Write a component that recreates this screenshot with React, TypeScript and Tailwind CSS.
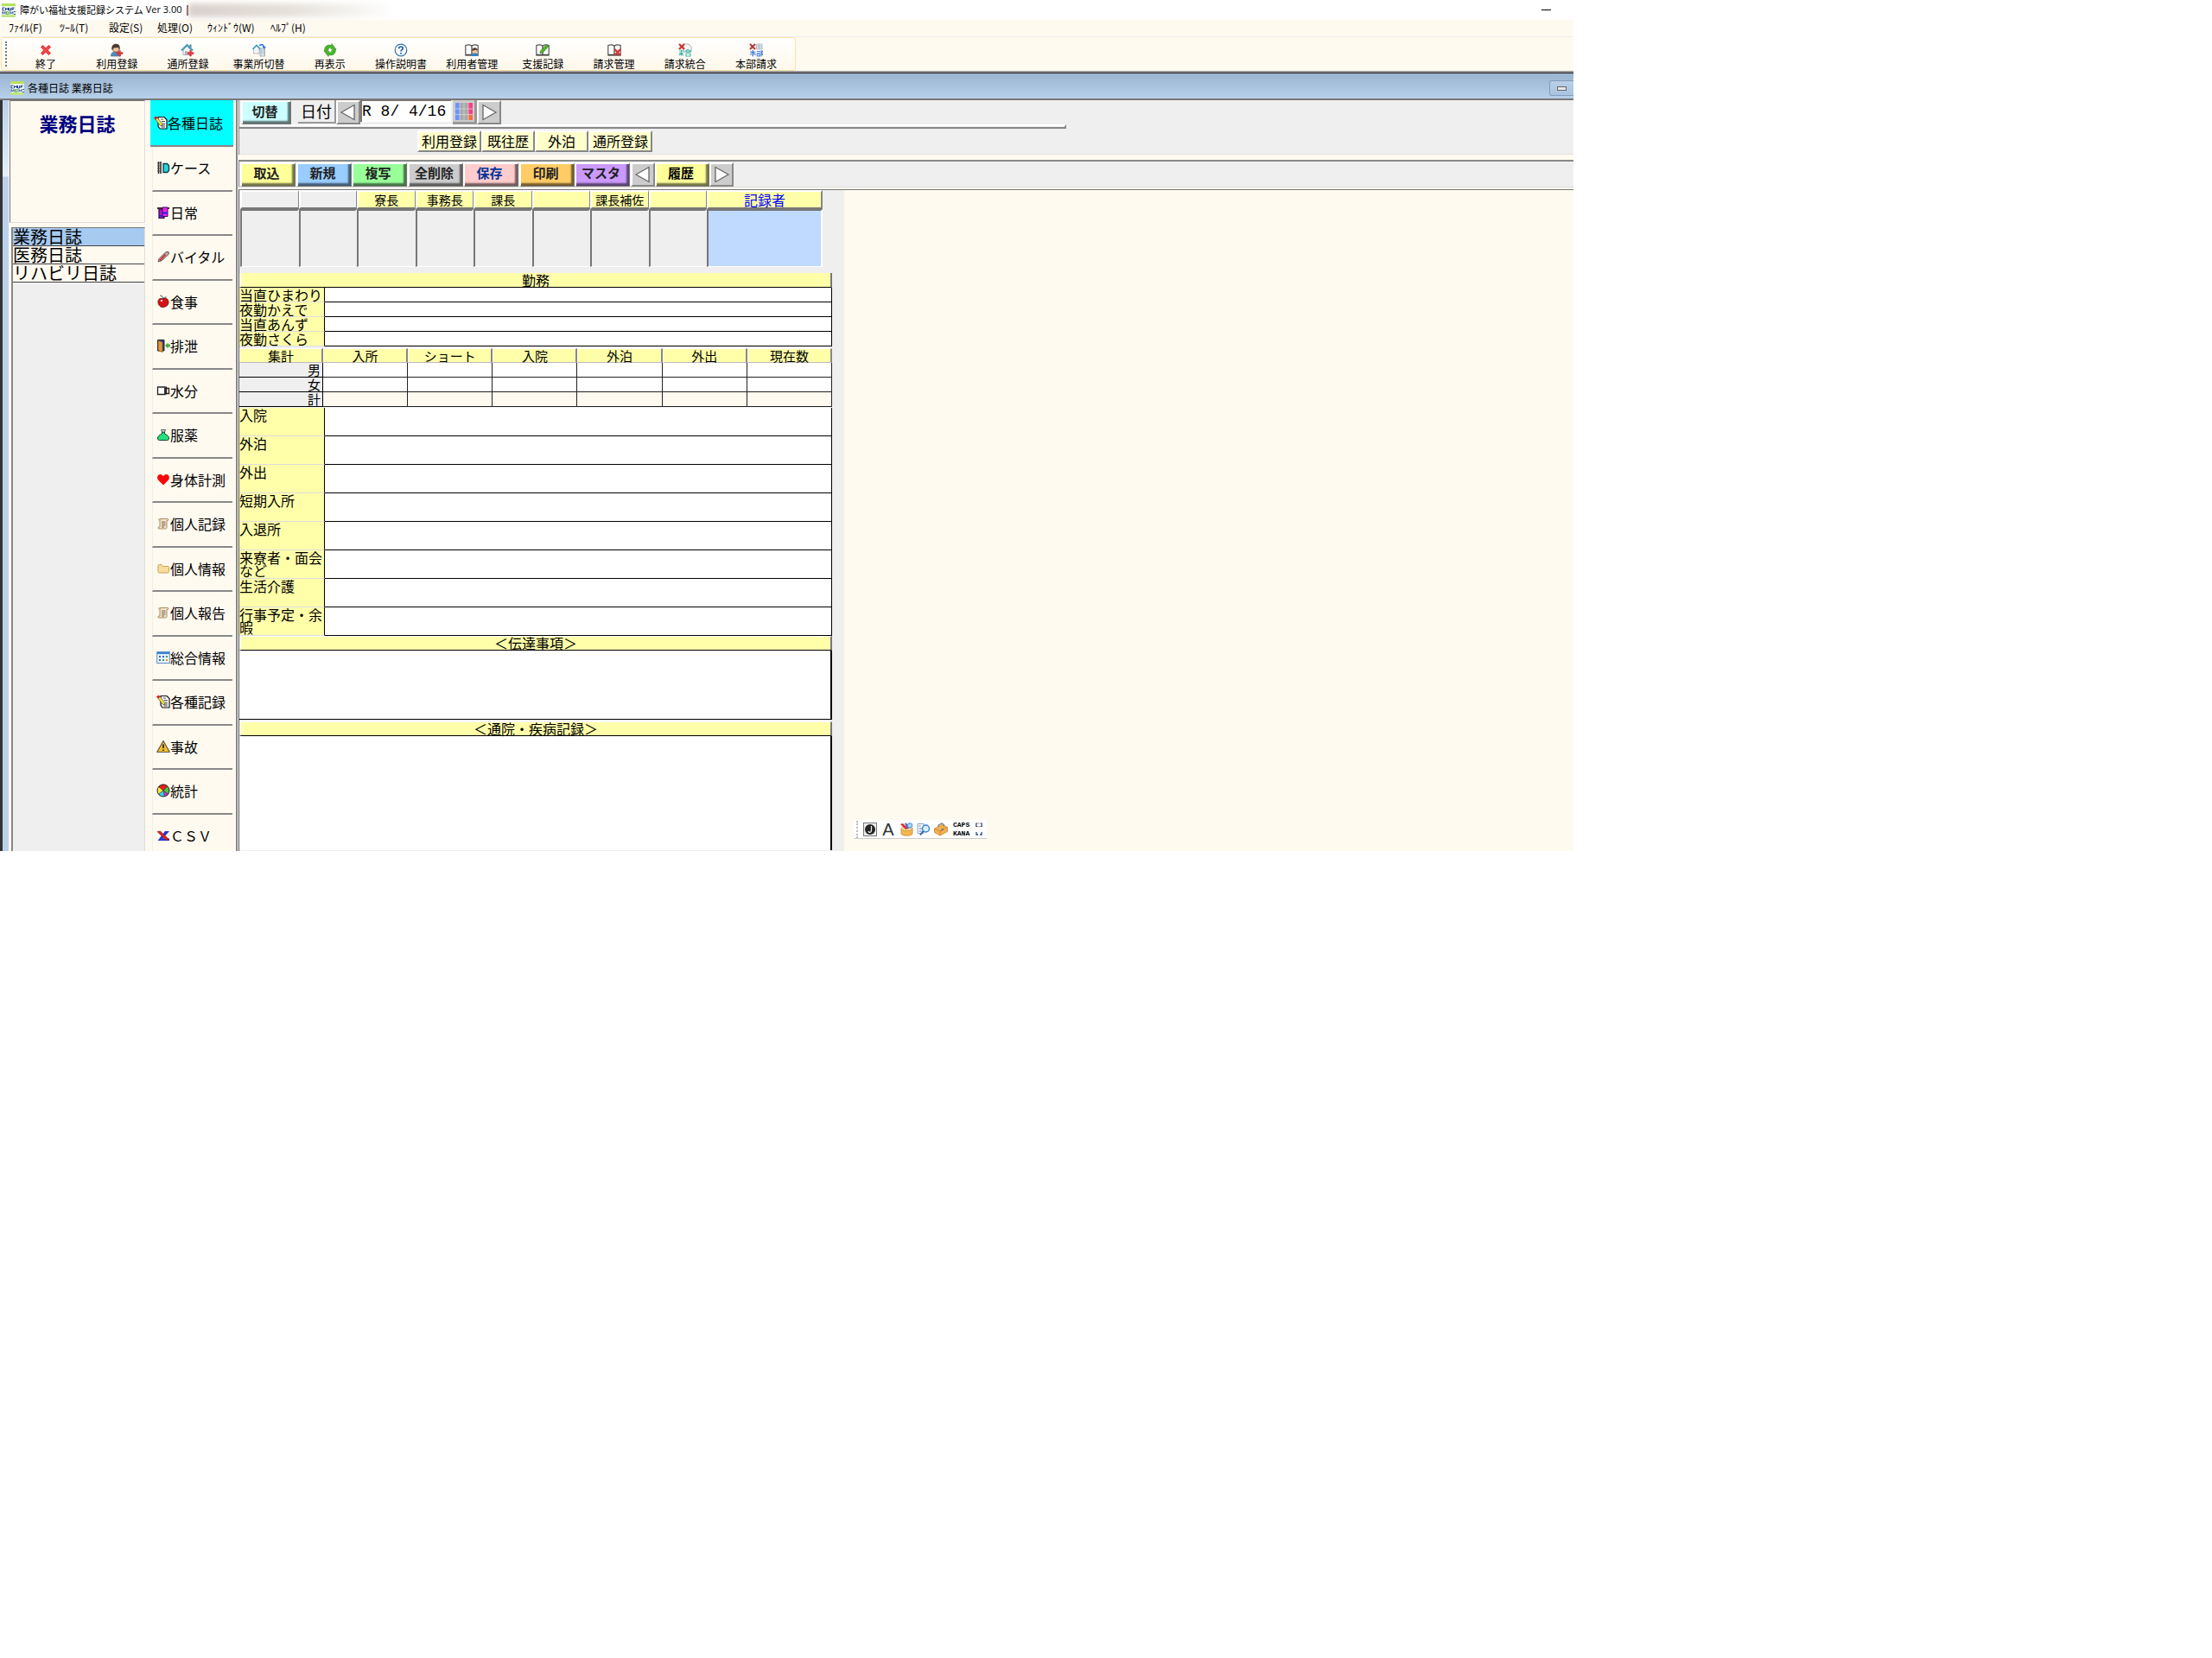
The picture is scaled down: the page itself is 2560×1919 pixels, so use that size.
import type { ReactNode } from "react";
import { clsx } from "clsx";

function Icon({ children, size = "h-4 w-4" }: { children: ReactNode; size?: string }) {
  return (
    <svg viewBox="0 0 16 16" className={clsx("shrink-0", size)} aria-hidden="true">
      {children}
    </svg>
  );
}

const redCross = (
  <path d="M2.5 4.5 4.5 2.5 8 5.8 11.5 2.5 13.5 4.5 10.2 8 13.5 11.5 11.5 13.5 8 10.2 4.5 13.5 2.5 11.5 5.8 8z" fill="#f04848" stroke="#e02c2c" strokeWidth="1" />
);

const redPlus = <path d="M10.5 8.5h2v2h2.5v2.2h-2.5V15h-2v-2.300H8v-2.200h2.500z" fill="#e8373c" stroke="#b8242a" strokeWidth=".4" />;

const openBook = (
  <>
    <path d="M.8 2.500C3.500 1.500 6 1.700 8 3c2-1.300 4.500-1.500 7.200-.5V14H.8z" fill="#fff" stroke="#555" strokeWidth="1.200" />
    <path d="M8 3v10.500M1 13.500h14" stroke="#444" strokeWidth="1.300" />
  </>
);

const house = (
  <>
    <path d="M3 7.500v6h8.500v-6L7.500 3.500z" fill="#f3f5f6" stroke="#8c9aa5" strokeWidth=".8" />
    <path d="M1 8.500 7.500 2l6.500 6.500" fill="none" stroke="#3f9fbd" strokeWidth="2" />
    <path d="M10.500 1.500h2v4l-2-2z" fill="#4a7f95" />
    <path d="M5 9h2.500v4.500H5z" fill="#9fb4c0" />
  </>
);

const scroll = (
  <>
    <path d="M4 2.500h9c1.200 0 1.200 2 0 2h-1v8c0 1.500-1 1.500-1.500 1.500H3c-1.500 0-1.500-2 0-2h1z" fill="#f5e6c8" stroke="#a88a62" />
    <path d="M6 6h4.500M6 8h4.500M6 10h4.500M6 12h3" stroke="#66594a" strokeWidth=".9" />
    <path d="M2 2.500h3v2H2.500z" fill="#c9ac80" />
  </>
);

const note = (
  <>
    <path d="M5 1.500h7l3 3V15H7l-2-3z" fill="#fff" stroke="#111" strokeWidth="1.200" />
    <path d="M8 4h3M9 6.500h4M10 9h3M8 11h5M8.500 13H13" stroke="#333" strokeWidth=".9" />
    <path d="M1.500 3.500 4 2l5.500 7 .5 3-3-1z" fill="#f7e23c" stroke="#444" strokeWidth=".7" />
    <path d="M0 2.500 2.500.5l2 2L2 4.500z" fill="#e01818" />
  </>
);

const appLogo = (
  <>
    <rect x=".5" y=".5" width="15" height="15" rx="1" fill="#f4fbf0" stroke="#dbe9d0" />
    <path d="M0 0h16v3H0zM0 13.500h16v2H0z" fill="#b4e25f" />
    <path d="M1 5h2.500M1 5v3h2.500M4.500 8V5l1.500 2 1.500-2v3M8.500 5v3h2V5M12 8V5h2.500M12 6.500h2" fill="none" stroke="#28479a" strokeWidth="1" />
    <path d="M1 12.500v-3l1.500 2 1.500-2v3M10 12.500v-3l1.500 2 1.500-2v3M14 9.500h2M14 12.500h2" fill="none" stroke="#28479a" strokeWidth=".9" />
    <rect x="5.500" y="9.800" width="2.500" height="2.500" fill="none" stroke="#49aa3a" />
  </>
);

const menus = [
  { label: "ﾌｧｲﾙ(F)", width: "w-[59px]" },
  { label: "ﾂｰﾙ(T)", width: "w-[57px]" },
  { label: "設定(S)", width: "w-[56px]" },
  { label: "処理(O)", width: "w-[58px]" },
  { label: "ｳｨﾝﾄﾞｳ(W)", width: "w-[73px]" },
  { label: "ﾍﾙﾌﾟ(H)", width: "w-[60px]" },
];

const tools = [
  { label: "終了", icon: redCross },
  {
    label: "利用登録",
    icon: (
      <>
        <path d="M1.500 15c0-4 2-5 5.500-5s5 1 5.500 5z" fill="#4d8fc9" stroke="#45627a" strokeWidth=".6" />
        <circle cx="7" cy="6.500" r="3.800" fill="#f2c49a" stroke="#5c4332" strokeWidth=".6" />
        <path d="M2.500 8C1.500 3 4 .8 7.500.8S12.500 4 11.500 8L9.800 5 5 5.500z" fill="#4b3a33" />
        {redPlus}
      </>
    ),
  },
  { label: "通所登録", icon: <>{house}{redPlus}</> },
  {
    label: "事業所切替",
    icon: (
      <>
        <path d="M1.500 6v6H8V6L5 3z" fill="#f2f4f5" stroke="#97a5ad" strokeWidth=".7" />
        <path d="m.5 7 4.500-4.500L9.500 7" fill="none" stroke="#3f9fbd" strokeWidth="1.600" />
        <path d="M9 6h5.500v9H9z" fill="#e4e9ed" stroke="#8797a3" strokeWidth=".7" />
        <path d="M10 8h1.500M12.500 8H14M10 10h1.500M12.500 10H14M10 12h1.500M12.500 12H14" stroke="#8fa5b5" />
        <path d="M8 2.500c3-1.500 5-1 5.500 2" fill="none" stroke="#2d6fdc" strokeWidth="1.600" />
        <path d="M11.500 4H16l-2.200 2.700z" fill="#2d6fdc" />
      </>
    ),
  },
  {
    label: "再表示",
    icon: (
      <>
        <path d="M1 9.500 1.500 8C1.500 4 5 1 9 2.500L10 .5l4.500 6H8.500L9.500 5C7 4.500 6 6 6 8.500z" fill="#48b52b" stroke="#2f8a1a" strokeWidth=".5" />
        <path d="m15 6.500-.5 1.500c0 4-3.500 7-7.500 5.500l-1 2-4.500-6h6L6.500 11c2.500.5 3.500-1 3.500-3.500z" fill="#48b52b" stroke="#2f8a1a" strokeWidth=".5" />
      </>
    ),
  },
  {
    label: "操作説明書",
    icon: (
      <>
        <circle cx="8" cy="8" r="6.800" fill="#f7fbff" stroke="#3474ab" strokeWidth="1.200" />
        <path d="M5.800 6.200c0-3 4.400-2.800 4.400-.2 0 1.700-2.200 1.700-2.200 3.500" fill="none" stroke="#235f96" strokeWidth="1.700" />
        <circle cx="8" cy="11.800" r="1" fill="#235f96" />
      </>
    ),
  },
  {
    label: "利用者管理",
    icon: (
      <>
        {openBook}
        <path d="M7.500 15c0-3 1.500-4 4-4s4 1 4 4z" fill="#3b7fb9" />
        <circle cx="11.500" cy="8.800" r="2.800" fill="#f0bf92" />
        <path d="M8.300 9c-.5-5 7-5 6.500 0l-2-1.500z" fill="#4d3a31" />
      </>
    ),
  },
  { label: "支援記録", icon: <>{openBook}<path d="M5 11.500 5.500 9 12.500 1.500 15 3.500 8 11z" fill="#58b52c" stroke="#2f7a15" strokeWidth=".7" /></> },
  { label: "請求管理", icon: <>{openBook}<path d="m8.500 7 6.500 7M15 7l-6.500 7" stroke="#d83434" strokeWidth="2.400" /></> },
  {
    label: "請求統合",
    icon: (
      <>
        <path d="M6 1h6l3 3v6H6z" fill="#f5f6f7" stroke="#9ba2a8" strokeWidth=".8" />
        <path d="m1 1 6 6M7 1 1 7" stroke="#c93434" strokeWidth="2.200" />
        <path d="M1 9h5M3.500 7.500v7M1 11.500h5M1 14l2-2 3 2M8 9.500l3-2 4 2M9 10h5M9 12h5v3H9z" fill="none" stroke="#3cb8a8" strokeWidth="1.100" />
      </>
    ),
  },
  {
    label: "本部請求",
    icon: (
      <>
        <path d="M8.500 1H15v6H8.500zM8.500 3H15M8.500 5H15M11.500 1v6" fill="#f2f4f6" stroke="#9db0bd" strokeWidth=".8" />
        <path d="m1 1 6 6M7 1 1 7" stroke="#b93a3a" strokeWidth="2.200" />
        <path d="M1 10h6.500M4.200 8v7.500M4.200 10 1 13.500M4.200 10l3.300 3.500M3 13.500h2.500M9 9.500h4M8.500 11.500H13M9.300 13h3v2h-3zM14 8.500v7M14 9h1.700l-1 2.500 1 2h-1.500" fill="none" stroke="#4d82dd" strokeWidth="1.100" />
      </>
    ),
  },
];

const navItems = [
  { label: "各種日誌", icon: note },
  {
    label: "ケース",
    icon: (
      <>
        <path d="M2.500 1v14M5 1v14" stroke="#222" strokeWidth="1.500" />
        <path d="M1 3h5M1 6h5M1 9h5M1 12h5" stroke="#555" />
        <path d="M8 3.500h4.500l2 2v6l-2 2H8z" fill="#25d3dd" stroke="#0f3c46" strokeWidth="1.300" />
      </>
    ),
  },
  {
    label: "日常",
    icon: (
      <>
        <path d="M1 3h14" stroke="#222" strokeWidth="1.800" />
        <path d="M3 4h6v10.500H3z" fill="#b812c8" stroke="#2a0b3a" strokeWidth="1.200" />
        <path d="M7 2h6v10.500H7z" fill="#ee22ee" stroke="#3a0b4a" />
        <path d="M7 8.500h6M3 12h4" stroke="#2424d8" strokeWidth="2" />
      </>
    ),
  },
  {
    label: "バイタル",
    icon: (
      <>
        <path d="M2 14 3 10.500 11 2.500l3 0 .5 2.500-8 7.500z" fill="#b7a7a4" stroke="#5c4a4a" strokeWidth=".9" />
        <path d="m4 12.500 6.500-7" stroke="#d42323" strokeWidth="1.800" />
      </>
    ),
  },
  {
    label: "食事",
    icon: (
      <>
        <path d="M8 5C3 3 1.500 6.500 2 9.500S5 15 8 14.500s6-2 6-5.500-2.500-6-6-4z" fill="#d41515" stroke="#6a0808" strokeWidth=".8" />
        <path d="M8 5.500C8 3 7 2 4.500 1M8 5c1-2 2-2 3.500-2" fill="none" stroke="#333" />
        <path d="M5 7.500 7 6.500" stroke="#fff" strokeWidth="1.500" />
      </>
    ),
  },
  {
    label: "排泄",
    icon: (
      <>
        <path d="M1.500 1.500H9V14H1.500z" fill="#27459a" stroke="#222" />
        <path d="M2 2l5 2v11.500L2 13.500z" fill="#e39a3c" stroke="#7a4a14" strokeWidth=".7" />
        <path d="m10 8 3.500-3.500v2H16v3h-2.500v2z" fill="#48a93a" />
      </>
    ),
  },
  {
    label: "水分",
    icon: (
      <>
        <path d="M1.500 4h8.500v8.500H1.500z" fill="#fff" stroke="#222" strokeWidth="1.300" />
        <path d="M10 5.500h4.500v6H10zM11.500 3.500v9" fill="none" stroke="#222" strokeWidth="1.300" />
      </>
    ),
  },
  {
    label: "服薬",
    icon: (
      <>
        <path d="M6.500 5v2C3 8.500 1.500 10.500 1.500 12c0 1.500.5 2.500 2 2.500h9c1.500 0 2-1 2-2.500 0-1.500-1.500-3.500-5-5V5z" fill="#25e07c" stroke="#17402b" />
        <path d="M5.500 2.500h5l-1 2.500h-3z" fill="#d9f5e6" stroke="#333" strokeWidth=".8" />
      </>
    ),
  },
  { label: "身体計測", icon: <path d="M8 14.500 2 8.500C-.5 5 2.500 1.500 5.500 2.200 7 2.500 8 4 8 4.500c0-.5 1-2 2.500-2.300 3-.7 6 2.800 3.500 6.300z" fill="#f80808" /> },
  { label: "個人記録", icon: scroll },
  { label: "個人情報", icon: <path d="M2 5c0-1 .5-1.500 1.500-1.500h2.500L7.500 5.500H13c1 0 1.500.5 1.500 1.500v4.500c0 1-.5 1.500-1.500 1.500H3.500C2.500 13 2 12.500 2 11.500z" fill="#f8dc9c" stroke="#cf9e55" /> },
  { label: "個人報告", icon: scroll },
  {
    label: "総合情報",
    icon: (
      <>
        <rect x=".7" y="1.500" width="14.600" height="13" fill="#eaf4ff" stroke="#5b8ec4" />
        <path d="M1 3h14" stroke="#3f86d8" strokeWidth="2.200" />
        <path d="M3 7h2M7 7h2M3 11h2" stroke="#3566c9" strokeWidth="2" />
        <path d="M11 7h2M7 11h2" stroke="#38a048" strokeWidth="2" />
        <path d="M11 11h2" stroke="#e08b28" strokeWidth="2" />
      </>
    ),
  },
  { label: "各種記録", icon: note },
  {
    label: "事故",
    icon: (
      <>
        <path d="M8 1.500 15.300 14.500H.7z" fill="#f5bd28" stroke="#5f5a52" strokeWidth="1.200" strokeLinejoin="round" />
        <path d="M8 5.500V10M8 11.500v1.500" stroke="#222" strokeWidth="1.700" />
      </>
    ),
  },
  {
    label: "統計",
    icon: (
      <>
        <circle cx="8" cy="8" r="7" fill="#f6e93c" />
        <path d="M8 8 2.500 3.500A7 7 0 0 1 13 3z" fill="#e51f1f" />
        <path d="M8 8 13 3a7 7 0 0 1 1 9z" fill="#42c948" />
        <path d="M8 8l6 4a7 7 0 0 1-4.500 2.800z" fill="#c92fd6" />
        <path d="M8 8l1.500 6.800A7 7 0 0 1 2.500 12z" fill="#35d2e8" />
        <path d="M8 8 2.500 3.500M8 8l5-5M8 8l6 4M8 8l1.500 6.800M8 8l-5.500 4" stroke="#222" strokeWidth=".6" />
        <circle cx="8" cy="8" r="7" fill="none" stroke="#222" />
      </>
    ),
  },
  {
    label: "ＣＳＶ",
    icon: (
      <>
        <path d="M10 3h5L7.500 11.500H15V14H1.500z" fill="#2038d8" />
        <path d="M1 3.500 4.500 3 14.500 12.500l-3.500 1z" fill="#e01c24" stroke="#5a0c20" strokeWidth=".5" />
      </>
    ),
  },
];

const diaries = ["業務日誌", "医務日誌", "リハビリ日誌"];
const lookups = [
  { label: "利用登録", width: "w-[74px]" },
  { label: "既往歴", width: "w-[62px]" },
  { label: "外泊", width: "w-[62px]" },
  { label: "通所登録", width: "w-[74px]" },
];
const actions = [
  { label: "取込", color: "bg-[#ffff99] text-[#222]" },
  { label: "新規", color: "bg-[#99ccff] text-[#222]" },
  { label: "複写", color: "bg-[#99ff99] text-[#222]" },
  { label: "全削除", color: "bg-[#cccccc] text-[#222]" },
  { label: "保存", color: "bg-[#ffcccc] text-[#003399]" },
  { label: "印刷", color: "bg-[#ffcc66] text-[#222]" },
  { label: "マスタ", color: "bg-[#cc99ff] text-[#222]" },
];
const approvers = ["", "", "寮長", "事務長", "課長", "", "課長補佐", ""];
const shifts = ["当直ひまわり", "夜勤かえで", "当直あんず", "夜勤さくら"];
const totals = ["集計", "入所", "ショート", "入院", "外泊", "外出", "現在数"];
const sexes = ["男", "女", "計"];
const details = ["入院", "外泊", "外出", "短期入所", "入退所", "来寮者・面会など", "生活介護", "行事予定・余暇"];

function RaisedButton({ label, className }: { label: string; className: string }) {
  return (
    <button
      type="button"
      className={clsx(
        "h-[28px] border-t-2 border-l-2 border-r border-b border-t-white border-l-white border-r-[#777] border-b-[#777] pr-1 pb-1 text-[15px] leading-[20px] font-bold whitespace-nowrap shadow-[inset_-3px_-3px_2px_rgba(0,0,0,0.55)]",
        className,
      )}
    >
      {label}
    </button>
  );
}

function ArrowButton({ label, points }: { label: string; points: string }) {
  return (
    <button
      type="button"
      aria-label={label}
      className="flex h-[28px] w-[28px] shrink-0 items-center justify-center border-t-2 border-l-2 border-r-2 border-b-2 border-t-white border-l-white border-r-[#888] border-b-[#888] bg-[#cccccc]"
    >
      <svg viewBox="0 0 20 20" className="h-5 w-5">
        <polygon points={points} fill="#fff" stroke="#666" strokeWidth="1.300" />
      </svg>
    </button>
  );
}

const leftArrow = "2,10 17,1.500 17,18.500";
const rightArrow = "18,10 3,1.500 3,18.500";

function SectionTitle({ children, htmlFor }: { children: ReactNode; htmlFor: string }) {
  return (
    <label
      htmlFor={htmlFor}
      className="block h-[17px] border-t border-r-2 border-b border-l-2 border-t-white border-r-[#777] border-b-black border-l-white bg-[#ffffaa] text-center text-[16px] leading-[15px]"
    >
      {children}
    </label>
  );
}

export default function App() {
  return (
    <div className="min-h-screen bg-white text-black [font-family:'Noto_Sans_CJK_JP',sans-serif]">
      <div className="flex w-full max-w-[1821px] flex-col">
        <header>
          <div className="flex h-[23px] items-center pl-[2px]">
            <Icon>{appLogo}</Icon>
            <h1 className="ml-[5px] text-[11px] whitespace-pre">障がい福祉支援記録システム</h1>
            <span className="ml-[3px] [font-family:'Open_Sans',sans-serif] text-[11px]">Ver 3.00</span>
            <span className="ml-[5px] h-[12px] w-[2px] bg-[#6b4a4a]" />
            <span className="h-[16px] w-[240px] bg-linear-to-r from-[#d9cfcb] via-[#e6e2da] to-white blur-[3px]" />
            <button type="button" aria-label="最小化" className="mr-[26px] ml-auto flex h-5 w-[11px] items-center">
              <span className="h-px w-full bg-black" />
            </button>
          </div>
          <nav className="flex h-[20px] items-start border-b border-[#eeeeee] bg-[#fffaf0] pl-[10px] text-[12px]">
            {menus.map((menu) => (
              <button key={menu.label} type="button" className={clsx("text-left leading-[17px] whitespace-nowrap", menu.width)}>
                {menu.label}
              </button>
            ))}
          </nav>
          <div className="flex h-[39px] bg-[#fffaf0] pl-px">
            <div className="flex w-[920px] rounded-[3px] border border-[#ffe3a8] bg-linear-to-b from-white to-[#fff8ea] px-[4px]">
              <span className="my-1 w-[2px] border-l-2 border-dotted border-[#777]" />
              <div className="ml-[4px] grid flex-1 grid-cols-11">
                {tools.map((tool) => (
                  <button key={tool.label} type="button" className="flex flex-col items-center pt-[6px] text-[12px] leading-[16px] whitespace-nowrap">
                    <Icon>{tool.icon}</Icon>
                    {tool.label}
                  </button>
                ))}
              </div>
            </div>
          </div>
        </header>

        <div className="flex flex-col border-t-2 border-[#999]">
          <div className="flex h-[32px] items-center border-t border-b-2 border-t-[#222] border-b-[#777] bg-linear-to-b from-[#9ab3d0] to-[#b7d0ea] pt-[5px] pl-[12px]">
            <Icon>{appLogo}</Icon>
            <h2 className="ml-1 text-[12px]">各種日誌 業務日誌</h2>
            <button
              type="button"
              aria-label="子ウィンドウを最小化"
              className="ml-auto flex h-[18px] w-[28px] items-center justify-center rounded-l-[3px] border border-r-0 border-[#829dbe] bg-linear-to-b from-[#b9d0e8] to-[#a9c4e0]"
            >
              <span className="h-[5px] w-[11px] border border-[#666] bg-[#e8e8e8]" />
            </button>
          </div>

          <div className="flex">
            <div className="w-[10px] shrink-0 border-l-3 border-[#333] bg-[linear-gradient(#b9d1ea,#e6effa_88px,#b9d1ea_89px)]" />

            <aside className="flex w-[164px] shrink-0 flex-col bg-[#fffaf0] pr-[6px] pl-px">
              <div className="h-[142px] border border-[#777] border-r-[#ddd] border-b-[#ddd] pt-[9px] text-center text-[22px] leading-[32px] font-bold text-[#000080]">
                業務日誌
              </div>
              <ul className="mt-[5px] ml-[2px] flex-1 border-t border-l-2 border-r border-t-[#777] border-r-[#ddd] border-l-[#888] bg-[#efefef]">
                {diaries.map((diary, i) => (
                  <li key={diary} className={clsx("border-b border-[#444]", i === 0 ? "bg-[#a6caf0]" : "bg-[#fffaf0]")}>
                    <button type="button" className="block h-[20px] w-full text-left text-[20px] leading-[20px]">
                      {diary}
                    </button>
                  </li>
                ))}
              </ul>
            </aside>

            <nav className="flex w-[101px] shrink-0 flex-col border-r-2 border-[#888] bg-[#fffaf0]">
              {navItems.map((item, i) => (
                <button
                  key={item.label}
                  type="button"
                  className={clsx(
                    "flex items-start text-[16px] leading-[24px] whitespace-nowrap",
                    i === 0 && "mr-[3px] h-[54px] border-b-2 border-[#888] bg-[#00ffff] pt-[14px] pl-[4px]",
                    i > 0 && "mr-[4px] ml-[2px] border-l border-l-[#eee] pt-[12px] pl-[4px]",
                    i > 0 && i < 16 && "h-[51px] border-b-2 border-b-[#888] even:h-[52px]",
                    i === 16 && "h-[42px]",
                  )}
                >
                  <span className="flex h-6 items-center">
                    <Icon>{item.icon}</Icon>
                  </span>
                  {item.label}
                </button>
              ))}
            </nav>

            <main className="flex min-w-0 flex-1 flex-col bg-[#fffaf0] pl-px">
              <div className="border-l border-[#888] bg-[#efefef]">
                <div className="flex h-[28px] items-start pl-[2px]">
                  <RaisedButton label="切替" className="w-[58px] bg-[#ccffff] text-[#222]" />
                  <label htmlFor="date" className="ml-[8px] h-[27px] w-[44px] border-r-2 border-b-2 border-[#999] text-center text-[18px] leading-[24px]">
                    日付
                  </label>
                  <ArrowButton label="前の日" points={leftArrow} />
                  <input
                    id="date"
                    type="text"
                    defaultValue="R 8/ 4/16"
                    className="h-[25px] w-[105px] border-t border-l-2 border-[#777] bg-white [font-family:'Liberation_Mono',monospace] text-[18px]"
                  />
                  <button
                    type="button"
                    aria-label="カレンダー"
                    className="ml-[2px] flex h-[28px] w-[28px] items-center justify-center border-r-3 border-b-3 border-[#999] bg-[#ccc]"
                  >
                    <svg viewBox="0 0 22 22" className="h-[22px] w-[22px]">
                      <path d="M1 1h5v20H1z" fill="#6c94ff" />
                      <path d="M6 1h10v20H6z" fill="#a8a8a8" />
                      <path d="M16 1h5v13h-5z" fill="#ff3c86" />
                      <path d="M16 14h5v7h-5z" fill="#ff6a3c" />
                      <path d="M1 8h20M1 14.500h20M6 1v20M11 1v20M16 1v20" stroke="#ddd" strokeWidth=".7" />
                    </svg>
                  </button>
                  <ArrowButton label="次の日" points={rightArrow} />
                </div>
                <div className="h-[5px] w-[957px] border-t-2 border-r-2 border-b-2 border-t-white border-r-[#888] border-b-[#888]" />
                <div className="flex h-[30px] border-b border-[#e2e2e2] pt-[2px] pl-[206px]">
                  {lookups.map((lookup) => (
                    <button
                      key={lookup.label}
                      type="button"
                      className={clsx(
                        "h-[25px] border-2 border-t-white border-r-[#888] border-b-[#888] border-l-white bg-[#ffffcc] text-[16px] leading-[21px] whitespace-nowrap",
                        lookup.width,
                      )}
                    >
                      {lookup.label}
                    </button>
                  ))}
                </div>
              </div>

              <div className="mt-[6px] flex h-[32px] items-center border-t-2 border-b border-l border-t-[#888] border-b-[#ddd] border-l-[#888] bg-[#efefef] pl-px">
                {actions.map((action) => (
                  <RaisedButton key={action.label} label={action.label} className={clsx("w-[64px] odd:mr-px", action.color)} />
                ))}
                <ArrowButton label="前の履歴" points={leftArrow} />
                <RaisedButton label="履歴" className="w-[63px] bg-[#ffff99]" />
                <ArrowButton label="次の履歴" points={rightArrow} />
              </div>

              <div className="mt-[2px] flex flex-1 border-t border-[#777]">
                <div className="w-[701px] shrink-0 border-l border-[#555] bg-[#efefef] pr-[14px]">
                  <table className="ml-px w-[674px] table-fixed border-separate border-spacing-0 text-[14px]">
                    <thead>
                      <tr>
                        {approvers.map((name, i) => (
                          <th
                            key={i}
                            className={clsx(
                              "h-[22px] border-t-2 border-r border-b-2 border-l-2 border-t-white border-r-[#888] border-b-[#777] border-l-white p-0 leading-[18px] font-normal whitespace-nowrap",
                              i > 1 && "bg-[#ffffaa]",
                            )}
                          >
                            {name}
                          </th>
                        ))}
                        <th className="h-[22px] w-[134px] border-2 border-t-white border-r-[#888] border-b-[#777] border-l-white bg-[#ffffaa] p-0 text-[16px] leading-[18px] font-normal text-[#0000ff]">
                          記録者
                        </th>
                      </tr>
                    </thead>
                    <tbody>
                      <tr>
                        {approvers.map((_, i) => (
                          <td key={i} className="h-[67px] border-t-2 border-r-2 border-b border-l-2 border-t-[#777] border-r-[#eee] border-b-white border-l-[#777]" />
                        ))}
                        <td className="h-[67px] border-t-2 border-r-2 border-b border-l-2 border-t-[#777] border-r-white border-b-white border-l-[#777] bg-[#bfd9ff]" />
                      </tr>
                    </tbody>
                  </table>

                  <table className="mt-[7px] w-full table-fixed border-separate border-spacing-0 text-[16px]">
                    <thead>
                      <tr>
                        <th className="h-0 w-[99px] p-0" />
                        <th className="h-0 p-0" />
                      </tr>
                      <tr>
                        <th colSpan={2} className="h-[17px] border-r-2 border-b border-l-2 border-r-[#777] border-b-black border-l-white bg-[#ffffaa] p-0 leading-[16px] font-normal">
                          勤務
                        </th>
                      </tr>
                    </thead>
                    <tbody>
                      {shifts.map((shift, i) => (
                        <tr key={shift}>
                          <th className="h-[17px] border-r border-b border-r-black border-b-[#ddd] bg-[#ffffaa] p-0 text-left leading-[16px] font-normal whitespace-nowrap">
                            <label htmlFor={`shift-${i}`}>{shift}</label>
                          </th>
                          <td className="h-[17px] border-r border-b border-black bg-white p-0">
                            <input id={`shift-${i}`} type="text" className="block h-[16px] w-full" />
                          </td>
                        </tr>
                      ))}
                    </tbody>
                  </table>

                  <table className="mt-[2px] w-full table-fixed border-separate border-spacing-0 text-[15px]">
                    <thead>
                      <tr>
                        {totals.map((total) => (
                          <th
                            key={total}
                            className="h-[17px] border-t border-r-2 border-b border-l border-t-white border-r-[#888] border-b-[#bbb] border-l-white bg-[#ffffaa] p-0 leading-[15px] font-normal first:w-[97px]"
                          >
                            {total}
                          </th>
                        ))}
                      </tr>
                    </thead>
                    <tbody>
                      {sexes.map((sex, i) => (
                        <tr key={sex}>
                          <th className="h-[17px] border-r border-b border-black bg-[#efefef] p-0 pr-[2px] text-right leading-[16px] font-normal">{sex}</th>
                          {totals.slice(1).map((total) => (
                            <td key={total} className={clsx("h-[17px] border-r border-b border-[#222] p-0", i === 2 ? "bg-[#fffaf0]" : "bg-white")}>
                              <input type="text" aria-label={`${total} ${sex}`} readOnly={i === 2} className="block h-[16px] w-full" />
                            </td>
                          ))}
                        </tr>
                      ))}
                    </tbody>
                  </table>

                  <table className="mt-px w-full table-fixed border-separate border-spacing-0 text-[16px]">
                    <tbody>
                      {details.map((detail, i) => (
                        <tr key={detail}>
                          <th className="h-[33px] w-[99px] border-r border-b border-r-black border-b-[#ddd] bg-[#ffffaa] p-0 text-left align-top leading-[15px] font-normal">
                            <label htmlFor={`detail-${i}`} className="block pt-px">
                              {detail}
                            </label>
                          </th>
                          <td className="h-[33px] border-r border-b border-black bg-white p-0">
                            <textarea id={`detail-${i}`} className="block h-[32px] w-full resize-none" />
                          </td>
                        </tr>
                      ))}
                    </tbody>
                  </table>

                  <SectionTitle htmlFor="messages">＜伝達事項＞</SectionTitle>
                  <textarea id="messages" className="block h-[80px] w-full resize-none border-r-2 border-b border-black bg-white" />
                  <div className="h-[2px]" />
                  <SectionTitle htmlFor="hospital">＜通院・疾病記録＞</SectionTitle>
                  <textarea id="hospital" className="block h-[132px] w-full resize-none border-r-2 border-black bg-white" />
                </div>

                <div className="relative flex-1">
                  {/* IME language bar floats over the empty area */}
                  <div className="absolute bottom-[14px] left-[11px] flex h-[22px] w-[154px] items-center border-b border-[#ccc] bg-white pl-[3px]">
                    <span className="mr-[6px] h-[20px] border-l-2 border-dotted border-[#bbb]" />
                    <Icon>
                      <rect x=".5" y=".5" width="15" height="15" fill="#eee" stroke="#777" />
                      <circle cx="8" cy="8" r="6" fill="#222" />
                      <path d="M9.500 4v5c0 3-3 3-3.500 1" fill="none" stroke="#eee" strokeWidth="1.300" />
                    </Icon>
                    <span className="w-[26px] text-center [font-family:'Liberation_Sans',sans-serif] text-[20px] leading-[20px] text-[#333]">A</span>
                    <Icon>
                      <path d="M2 7v6c1 3 12 3 13 0V7z" fill="#f3b850" stroke="#b9792a" strokeWidth=".7" />
                      <ellipse cx="8.500" cy="7" rx="6.500" ry="2.500" fill="#ffe19c" stroke="#b9792a" strokeWidth=".6" />
                      <path d="m1 2 3-1 6 6-3 1z" fill="#d83328" />
                      <path d="m6 1 2-.5 3 6-2 1z" fill="#4d5fc9" />
                      <circle cx="12" cy="3.500" r="2.800" fill="#a7d5fa" stroke="#4a8ac9" />
                    </Icon>
                    <span className="ml-[4px] flex">
                      <Icon>
                        <path d="M1 1.500h7v11H1z" fill="#fff" stroke="#8da3c5" />
                        <path d="M2.500 4h2M2.500 7h4M2.500 10h3" stroke="#5272a9" />
                        <circle cx="10.500" cy="7" r="4" fill="#d9efff" stroke="#3f82cf" strokeWidth="1.500" />
                        <path d="M7.500 10 4 14.500" stroke="#2e64ad" strokeWidth="2" />
                      </Icon>
                    </span>
                    <span className="mx-[4px] flex">
                      <Icon>
                        <path d="M.5 7 9 2.500l6.500 3v5L7 15 .5 11.500z" fill="#f4b04e" stroke="#c07a24" strokeWidth=".7" />
                        <path d="M.5 7 7 10l8.500-4.500M7 10v5" fill="none" stroke="#cf8427" strokeWidth=".8" />
                        <path d="M5 5V3l4-2 2.500 1.500v2" fill="none" stroke="#777" strokeWidth="1.200" />
                        <path d="m8 8 3-1.500v2L8 10z" fill="#697a8c" />
                      </Icon>
                    </span>
                    <span className="ml-[2px] w-[26px] [font-family:'Liberation_Mono',monospace] text-[8px] leading-[10px] font-bold">
                      CAPS
                      <br />
                      KANA
                    </span>
                    <svg viewBox="0 0 8 16" className="h-4 w-2" aria-hidden="true">
                      <path d="M2 1H.8v3.500H2M6 1h1.200v3.500H6" fill="none" stroke="#274a8a" strokeWidth="1.200" />
                      <path d="M2 1h4M2 4.500h4" stroke="#c58a4a" strokeWidth=".8" />
                      <path d="M1 11v3h2M7 11v3H5" fill="none" stroke="#274a8a" strokeWidth="1.300" />
                    </svg>
                  </div>
                </div>
              </div>
            </main>
          </div>
        </div>
      </div>
    </div>
  );
}
